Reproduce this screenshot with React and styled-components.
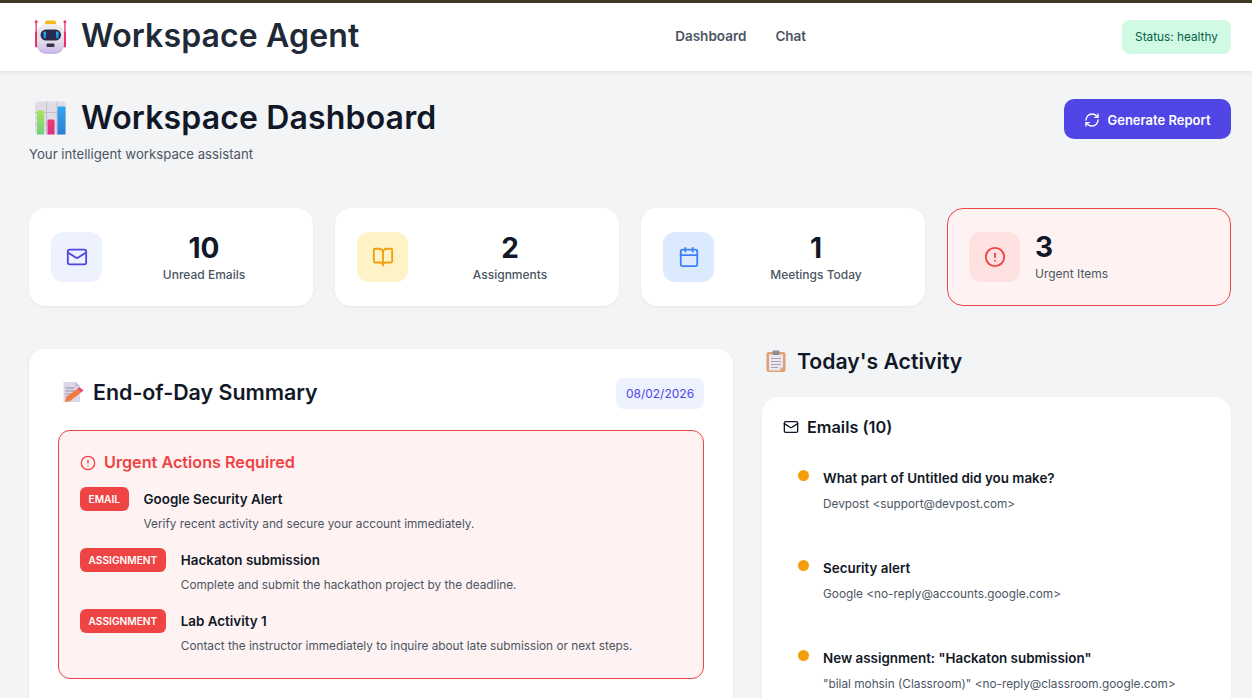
import React from "react";
import styled, { createGlobalStyle } from "styled-components";
import { Mail, BookOpen, Calendar, AlertCircle, RefreshCw } from "lucide-react";

const Global = createGlobalStyle`
  html, body { margin: 0; padding: 0; height: 698px; overflow: hidden; background: #f3f4f6; }
  body { font-family: Inter, "Liberation Sans", sans-serif; color: #111827; }
  * { box-sizing: border-box; }
`;

const Page = styled.div`
  height: 698px;
  overflow: hidden;
  border-top: 3px solid #3d3a22;
`;
const Header = styled.header`
  height: 68px;
  background: #fff;
  box-shadow: 0 1px 4px rgba(0, 0, 0, 0.1);
  padding: 0 21px 0 33px;
  display: flex;
  justify-content: space-between;
  align-items: center;
  position: relative;
`;
const Brand = styled.div`
  display: flex;
  align-items: center;
  gap: 14px;
  margin-top: -4px;
  font-size: 32px;
  letter-spacing: 0.13px;
  font-weight: 600;
  color: #1f2937;
  svg { margin-top: 3px; }
`;
const Nav = styled.nav`
  display: flex;
  gap: 29px;
  margin-top: -2px;
  font-size: 13.5px;
  font-weight: 600;
  color: #4b5563;
`;
const Status = styled.div`
  background: #d1fae5;
  color: #065f46;
  font-size: 11.8px;
  height: 34px;
  width: 109px;
  justify-content: center;
  border-radius: 8px;
  display: flex;
  align-items: center;
`;
const Main = styled.main`
  padding: 28px 21px 0 29px;
`;
const TopRow = styled.div`
  display: flex;
  justify-content: space-between;
  align-items: flex-start;
`;
const PageTitle = styled.h1`
  margin: 0 0 0 4px;
  display: flex;
  align-items: center;
  gap: 14px;
  font-size: 32px;
  letter-spacing: 0.15px;
  line-height: 38px;
  font-weight: 600;
  color: #111827;
`;
const Subtitle = styled.p`
  margin: 9px 0 0;
  font-size: 13.2px;
  line-height: 17px;
  color: #4b5563;
`;
const GenerateButton = styled.button`
  width: 167px;
  height: 40px;
  border: 0;
  padding: 1px 0 0;
  border-radius: 10px;
  background: #4f46e5;
  color: #fff;
  font: 600 13px Inter, sans-serif;
  display: flex;
  align-items: center;
  justify-content: center;
  gap: 7px;
`;
const Stats = styled.section`
  margin-top: 45px;
  display: grid;
  grid-template-columns: repeat(4, 1fr);
  gap: 22px;
`;
const StatCard = styled.div`
  height: 98px;
  border-radius: 16px;
  padding: 0 ${(p) => (p.$urgent ? "21px" : "22px")};
  display: flex;
  align-items: center;
  gap: 15px;
  background: ${(p) => (p.$urgent ? "#fef2f2" : "#fff")};
  border: ${(p) => (p.$urgent ? "1px solid #ef4444" : "0")};
  box-shadow: ${(p) => (p.$urgent ? "none" : "0 1px 3px rgba(0, 0, 0, 0.06)")};
`;
const StatIcon = styled.div`
  width: 51px;
  height: 50px;
  flex: none;
  border-radius: 12px;
  display: flex;
  align-items: center;
  justify-content: center;
  background: ${(p) => p.$bg};
  color: ${(p) => p.$fg};
`;
const StatBody = styled.div`
  flex: 1;
  margin-top: ${(p) => (p.$urgent ? "-2px" : "0")};
  text-align: ${(p) => (p.$urgent ? "left" : "center")};
`;
const StatValue = styled.div`
  font-size: 28px;
  line-height: 34px;
  font-weight: 700;
  color: #111827;
`;
const StatLabel = styled.div`
  margin-top: 1px;
  font-size: 12px;
  line-height: 18px;
  font-weight: ${(p) => (p.$urgent ? 400 : 500)};
  color: #4b5563;
`;
const Columns = styled.section`
  margin-top: 43px;
  display: grid;
  grid-template-columns: 704px 1fr;
  gap: 29px;
  align-items: start;
`;
const SummaryCard = styled.div`
  background: #fff;
  border-radius: 16px;
  padding: 29px 29px 40px;
  box-shadow: 0 1px 3px rgba(0, 0, 0, 0.08);
`;
const SummaryHead = styled.div`
  display: flex;
  justify-content: space-between;
  align-items: flex-start;
  padding-left: 4px;
`;
const SectionTitle = styled.h2`
  margin: 0;
  display: flex;
  align-items: center;
  gap: 9px;
  font-size: 21.4px;
  line-height: 28px;
  font-weight: 600;
  color: #111827;
`;
const DateChip = styled.div`
  width: 88px;
  height: 31px;
  border-radius: 8px;
  background: #eef2ff;
  color: #4f46e5;
  font-size: 12px;
  display: flex;
  align-items: center;
  justify-content: center;
`;
const UrgentBox = styled.div`
  margin-top: 21px;
  height: 249px;
  padding: 21px;
  background: #fef2f2;
  border: 1px solid #ef4444;
  border-radius: 12px;
`;
const UrgentTitle = styled.h3`
  margin: 0 0 14px;
  display: flex;
  align-items: center;
  gap: 8px;
  color: #ef4444;
  font-size: 16.2px;
  line-height: 21px;
  font-weight: 600;
`;
const UrgentItem = styled.div`
  display: flex;
  gap: 15px;
  margin-bottom: 15px;
  align-items: flex-start;
`;
const Tag = styled.span`
  height: 24px;
  padding: 0 8.5px;
  border-radius: 6px;
  background: #ef4444;
  color: #fff;
  font-size: 10.2px;
  font-weight: 600;
  display: flex;
  align-items: center;
  flex: none;
`;
const ItemTitle = styled.div`
  font-size: 13.4px;
  line-height: 24px;
  font-weight: 600;
  color: #111827;
`;
const ItemText = styled.div`
  font-size: 11.8px;
  line-height: 18px;
  margin-top: 4px;
  color: #4b5563;
`;
const ActivityTitle = styled(SectionTitle)`
  margin-top: -2px;
  padding-left: 4px;
  gap: 11px;
  font-size: 21.2px;
`;
const ActivityCard = styled.div`
  margin-top: 22px;
  background: #fff;
  border-radius: 16px;
  padding: 20px 21px;
  min-height: 320px;
  box-shadow: 0 1px 3px rgba(0, 0, 0, 0.06);
`;
const ActivityHead = styled.h3`
  margin: 0 0 32px;
  display: flex;
  align-items: center;
  gap: 8px;
  font-size: 16.3px;
  line-height: 20px;
  font-weight: 600;
  color: #111827;
`;
const EmailRow = styled.div`
  display: flex;
  gap: 14px;
  height: 90px;
  padding-left: 15px;
`;
const Dot = styled.span`
  width: 11px;
  height: 11px;
  margin-top: 1px;
  border-radius: 50%;
  background: #f59e0b;
  flex: none;
`;
const EmailSubject = styled.div`
  font-size: 13.4px;
  line-height: 18px;
  font-weight: 600;
  color: #111827;
`;
const EmailFrom = styled.div`
  font-size: 11.8px;
  line-height: 18px;
  margin-top: 8px;
  color: #4b5563;
`;

const RobotIcon = () => (
  <svg width="34" height="34" viewBox="0 0 34 34">
    <defs>
      <linearGradient id="rb" x1="0" y1="0" x2="0" y2="1">
        <stop offset="0" stopColor="#eeebef" />
        <stop offset="0.6" stopColor="#e2dce8" />
        <stop offset="1" stopColor="#c9b3ec" />
      </linearGradient>
      <linearGradient id="eye" x1="0" y1="0" x2="0" y2="1">
        <stop offset="0" stopColor="#19c3f5" />
        <stop offset="1" stopColor="#1a78d8" />
      </linearGradient>
    </defs>
    <rect x="2.5" y="1" width="1.4" height="12" fill="#f0407a" />
    <rect x="31.2" y="1" width="1.4" height="12" fill="#f0407a" />
    <circle cx="3.2" cy="1.8" r="1.5" fill="#ee2f6b" />
    <circle cx="31.9" cy="1.8" r="1.5" fill="#ee2f6b" />
    <rect x="2" y="11.5" width="3" height="16" rx="1.4" fill="#e7326e" />
    <rect x="30" y="11.5" width="3" height="16" rx="1.4" fill="#e7326e" />
    <rect x="12" y="0.5" width="11" height="5" rx="2" fill="#f5b81e" />
    <rect x="4" y="4" width="27" height="30" rx="9" fill="url(#rb)" />
    <rect x="7.5" y="9.5" width="20.5" height="11" rx="5.5" fill="#2b2a4c" />
    <rect x="10.5" y="11.5" width="2.6" height="7" rx="1.3" fill="url(#eye)" />
    <rect x="23" y="11.5" width="2.6" height="7" rx="1.3" fill="url(#eye)" />
    <rect x="13.5" y="23.5" width="8" height="3.4" rx="1.2" fill="#37324a" />
  </svg>
);
const ChartIcon = () => (
  <svg width="34" height="34" viewBox="0 0 34 34">
    <defs>
      <linearGradient id="g1" x1="0" y1="0" x2="0" y2="1">
        <stop offset="0" stopColor="#a9e35a" />
        <stop offset="1" stopColor="#6fd27e" />
      </linearGradient>
      <linearGradient id="g2" x1="0" y1="0" x2="0" y2="1">
        <stop offset="0" stopColor="#ee3a76" />
        <stop offset="1" stopColor="#db2f86" />
      </linearGradient>
      <linearGradient id="g3" x1="0" y1="0" x2="0" y2="1">
        <stop offset="0" stopColor="#2fa8f2" />
        <stop offset="1" stopColor="#2f7dd6" />
      </linearGradient>
    </defs>
    <rect x="2" y="0.5" width="31" height="33" rx="4" fill="#e0dce6" />
    <path d="M13.5 0.5v33M24 0.5v33M2 11.5h31M2 23h31" stroke="#c3bfca" strokeWidth="1" />
    <path d="M4 10.5q0-1 1-1h5q1 0 1 1v23H4z" fill="url(#g1)" />
    <path d="M14.5 19.5q0-1 1-1h5q1 0 1 1v14h-7z" fill="url(#g2)" />
    <path d="M24.5 6.5q0-1 1-1h6q1 0 1 1v27h-8z" fill="url(#g3)" />
  </svg>
);
const MemoIcon = () => (
  <svg width="22" height="22" viewBox="0 0 22 22">
    <path d="M1.5 1h12l4.5 4.5V21H1.5z" fill="#dcd7e8" />
    <path d="M13.5 1l4.5 4.5h-4.5z" fill="#bfb8cc" />
    <path d="M3.5 7h9M3.5 10h9M3.5 13h7M3.5 16h5" stroke="#938e9e" strokeWidth="1" />
    <path d="M3 21l1.5-5L15 8l4 3.5L8 20z" fill="#f4793b" />
    <path d="M15 8l2.5-2 4 3.5-2.5 2z" fill="#ef4a72" />
  </svg>
);
const ClipboardIcon = () => (
  <svg width="20" height="22" viewBox="0 0 20 22">
    <rect x="0.5" y="2" width="19" height="20" rx="2" fill="#e0a070" />
    <path d="M3 4.5h14v13l-3 3H3z" fill="#ebe6ef" />
    <path d="M14 20.5v-3h3z" fill="#c9b8c0" />
    <rect x="6.5" y="0.5" width="7" height="4.5" rx="1" fill="#8f8a99" />
    <path d="M5 8.5h10M5 11.5h10M5 14.5h10M5 17.5h7" stroke="#a6a1b0" strokeWidth="1" />
  </svg>
);

const stats = [
  { icon: Mail, bg: "#eef2ff", fg: "#4f46e5", value: "10", label: "Unread Emails" },
  { icon: BookOpen, bg: "#fef3c7", fg: "#f59e0b", value: "2", label: "Assignments" },
  { icon: Calendar, bg: "#dbeafe", fg: "#3b82f6", value: "1", label: "Meetings Today" },
  { icon: AlertCircle, bg: "#fee2e2", fg: "#ef4444", value: "3", label: "Urgent Items", urgent: true },
];
const urgent = [
  { tag: "EMAIL", title: "Google Security Alert", text: "Verify recent activity and secure your account immediately." },
  { tag: "ASSIGNMENT", title: "Hackaton submission", text: "Complete and submit the hackathon project by the deadline." },
  { tag: "ASSIGNMENT", title: "Lab Activity 1", text: "Contact the instructor immediately to inquire about late submission or next steps." },
];
const emails = [
  { subject: "What part of Untitled did you make?", from: "Devpost <support@devpost.com>" },
  { subject: "Security alert", from: "Google <no-reply@accounts.google.com>" },
  { subject: 'New assignment: "Hackaton submission"', from: '"bilal mohsin (Classroom)" <no-reply@classroom.google.com>' },
];

export default function App() {
  return (
    <Page>
      <Global />
      <Header>
        <Brand><RobotIcon />Workspace Agent</Brand>
        <Nav><span>Dashboard</span><span>Chat</span></Nav>
        <Status>Status: healthy</Status>
      </Header>
      <Main>
        <TopRow>
          <div>
            <PageTitle><ChartIcon />Workspace Dashboard</PageTitle>
            <Subtitle>Your intelligent workspace assistant</Subtitle>
          </div>
          <GenerateButton><RefreshCw size={16} />Generate Report</GenerateButton>
        </TopRow>
        <Stats>
          {stats.map((s) => (
            <StatCard key={s.label} $urgent={s.urgent}>
              <StatIcon $bg={s.bg} $fg={s.fg}><s.icon size={22} /></StatIcon>
              <StatBody $urgent={s.urgent}>
                <StatValue>{s.value}</StatValue>
                <StatLabel $urgent={s.urgent}>{s.label}</StatLabel>
              </StatBody>
            </StatCard>
          ))}
        </Stats>
        <Columns>
          <SummaryCard>
            <SummaryHead>
              <SectionTitle><MemoIcon />End-of-Day Summary</SectionTitle>
              <DateChip>08/02/2026</DateChip>
            </SummaryHead>
            <UrgentBox>
              <UrgentTitle><AlertCircle size={16} />Urgent Actions Required</UrgentTitle>
              {urgent.map((u) => (
                <UrgentItem key={u.title}>
                  <Tag>{u.tag}</Tag>
                  <div>
                    <ItemTitle>{u.title}</ItemTitle>
                    <ItemText>{u.text}</ItemText>
                  </div>
                </UrgentItem>
              ))}
            </UrgentBox>
          </SummaryCard>
          <div>
            <ActivityTitle><ClipboardIcon />Today's Activity</ActivityTitle>
            <ActivityCard>
              <ActivityHead><Mail size={16} />Emails (10)</ActivityHead>
              {emails.map((e) => (
                <EmailRow key={e.subject}>
                  <Dot />
                  <div>
                    <EmailSubject>{e.subject}</EmailSubject>
                    <EmailFrom>{e.from}</EmailFrom>
                  </div>
                </EmailRow>
              ))}
            </ActivityCard>
          </div>
        </Columns>
      </Main>
    </Page>
  );
}
